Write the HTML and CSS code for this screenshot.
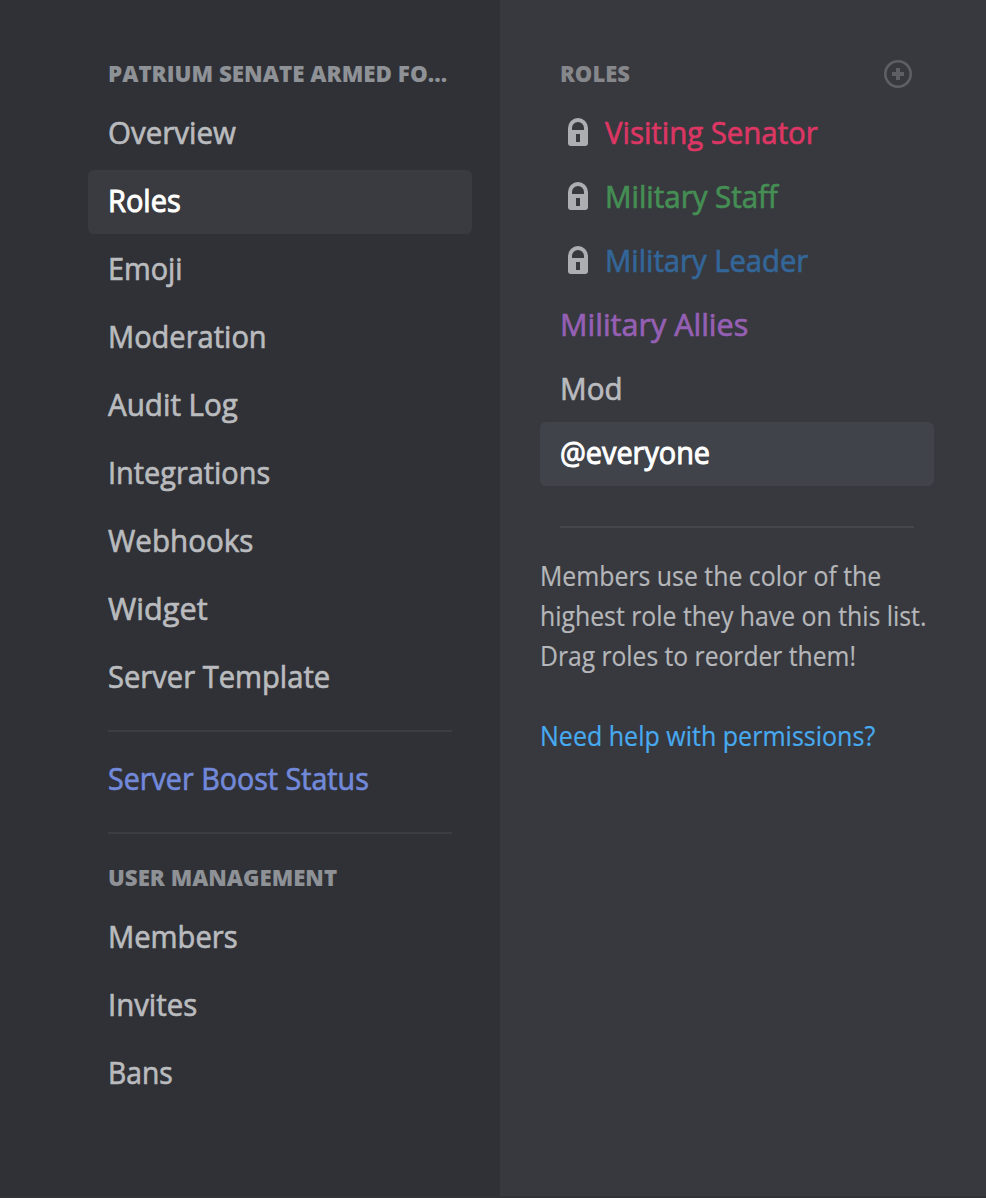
FILE: index.html
```html
<!DOCTYPE html>
<html lang="en">
<head>
<meta charset="utf-8">
<title>Server Settings - Roles</title>
<link rel="stylesheet" href="styles.css">
</head>
<body>
<svg class="sprite" aria-hidden="true">
  <symbol id="lock" viewBox="0 0 20 28">
    <path fill-rule="evenodd" d="M10 0A10 10 0 0 0 0 10V25A3 3 0 0 0 3 28H17A3 3 0 0 0 20 25V10A10 10 0 0 0 10 0ZM4 12V10A6 6 0 0 1 16 10V12ZM8 16H12V24H8Z"/>
  </symbol>
</svg>
<div class="app">
  <nav class="sidebar">
    <h2 class="heading"><span class="label t-server">Patrium Senate Armed Fo...</span></h2>
    <a class="item"><span class="label t-overview">Overview</span></a>
    <a class="item selected"><span class="label t-roles">Roles</span></a>
    <a class="item"><span class="label t-emoji">Emoji</span></a>
    <a class="item"><span class="label t-moderation">Moderation</span></a>
    <a class="item"><span class="label t-audit">Audit Log</span></a>
    <a class="item"><span class="label t-integrations">Integrations</span></a>
    <a class="item"><span class="label t-webhooks">Webhooks</span></a>
    <a class="item"><span class="label t-widget">Widget</span></a>
    <a class="item"><span class="label t-template">Server Template</span></a>
    <div class="separator"></div>
    <a class="item boost"><span class="label t-boost">Server Boost Status</span></a>
    <div class="separator"></div>
    <h2 class="heading users"><span class="label t-users">User Management</span></h2>
    <a class="item"><span class="label t-members">Members</span></a>
    <a class="item"><span class="label t-invites">Invites</span></a>
    <a class="item"><span class="label t-bans">Bans</span></a>
  </nav>
  <main class="roles">
    <header class="roles-header">
      <h2 class="heading"><span class="label t-roles-title">Roles</span></h2>
      <svg class="add" viewBox="0 0 28 28"><circle cx="14" cy="14" r="12.7"/><path d="M8 14H20M14 8V20"/></svg>
    </header>
    <div class="role red"><svg class="lock"><use href="#lock"/></svg><span class="label t-senator">Visiting Senator</span></div>
    <div class="role green"><svg class="lock"><use href="#lock"/></svg><span class="label t-staff">Military Staff</span></div>
    <div class="role blue"><svg class="lock"><use href="#lock"/></svg><span class="label t-leader">Military Leader</span></div>
    <div class="role purple"><span class="label t-allies">Military Allies</span></div>
    <div class="role"><span class="label t-mod">Mod</span></div>
    <div class="role selected"><span class="label t-everyone">@everyone</span></div>
    <div class="separator"></div>
    <p class="note"><span class="label t-note1">Members use the color of the</span><br><span class="label t-note2">highest role they have on this list.</span><br><span class="label t-note3">Drag roles to reorder them!</span></p>
    <a class="help"><span class="label t-help">Need help with permissions?</span></a>
  </main>
</div>
</body>
</html>
```
FILE: styles.css
```css
* { box-sizing: border-box; }
body { margin: 0; background: #36393f; font-family: "Open Sans", "Noto Sans", sans-serif; }
.sprite { display: none; }
.app { display: flex; height: 1198px; overflow: hidden; border-bottom: 2px solid #323337; background: #38393e; }
.sidebar { width: 500px; padding: 44px 28px 0 88px; background: #303136; }
.heading { height: 58px; margin: 0; padding-left: 20px; font-size: 23.5px; line-height: 58px; font-weight: 800; text-transform: uppercase; color: #8e9297; white-space: nowrap; }
.item { display: flex; align-items: center; height: 64px; margin-bottom: 4px; padding: 0 0 4px 20px; border-radius: 6px; font-size: 31px; font-weight: 500; -webkit-text-stroke: 0.7px currentColor; color: #b9bbbe; white-space: nowrap; }
.item.selected { background: #3a3b40; color: #fff; }
.item.boost { color: #7289da; }
.separator { height: 2px; margin: 20px 20px 16px; background: #3c3d42; }
.separator + .heading { margin-top: -2px; }
.roles { width: 486px; padding: 44px 52px 0 40px; }
.roles-header { display: flex; justify-content: space-between; align-items: center; padding-right: 22px; height: 58px; }
.roles-header .heading { color: #86878b; }
.add { width: 28px; height: 28px; margin-top: 2px; fill: none; stroke: #5d5f64; stroke-width: 2.6; }
.add path { stroke-width: 4; }
.role { display: flex; align-items: center; height: 64px; padding: 0 0 4px 20px; border-radius: 6px; font-size: 31px; font-weight: 500; -webkit-text-stroke: 0.7px currentColor; color: #b9bbbe; white-space: nowrap; }
.role.selected { background: #40434a; color: #fff; }
.item.selected, .role.selected { -webkit-text-stroke-width: 1px; }
.lock { width: 20px; height: 28px; margin: 0 17px 0 8px; fill: #adaeb1; stroke: none; }
.red { color: #dc3664; }
.green { color: #458e54; }
.blue { color: #336699; }
.purple { color: #9560b4; }
.roles .separator { margin: 40px 20px 28px; background: #45464b; }
.note { margin: 0 0 40px; font-size: 27px; line-height: 40px; color: #b5b7ba; white-space: nowrap; }
.help { display: block; font-size: 27px; line-height: 40px; color: #47aaf0; white-space: nowrap; }
.note, .help { -webkit-text-stroke: 0.2px currentColor; }

/* Labels are set slightly condensed */
.label { display: inline-block; transform-origin: 0 50%; }
.t-server { transform: scaleX(0.952); }
.t-overview { transform: scaleX(0.952); }
.t-roles { transform: scaleX(0.935); }
.t-emoji { transform: scaleX(0.93); }
.t-moderation { transform: scaleX(0.937); }
.t-audit { transform: scaleX(0.954); }
.t-integrations { transform: scaleX(0.931); }
.t-webhooks { transform: scaleX(0.954); }
.t-widget { transform: scaleX(0.99); }
.t-template { transform: scaleX(0.94); }
.t-boost { transform: scaleX(0.925); }
.t-users { transform: scaleX(0.946); }
.t-members { transform: scaleX(0.94); }
.t-invites { transform: scaleX(0.947); }
.t-bans { transform: scaleX(0.91); }
.t-roles-title { transform: scaleX(0.935); }
.t-senator { transform: scaleX(0.947); }
.t-staff { transform: scaleX(0.95); }
.t-leader { transform: scaleX(0.942); }
.t-allies { transform: scaleX(0.985); }
.t-mod { transform: scaleX(0.955); }
.t-everyone { transform: scaleX(0.93); }
.t-note1 { transform: scaleX(0.92); }
.t-note2 { transform: scaleX(0.919); }
.t-note3 { transform: scaleX(0.913); }
.t-help { transform: scaleX(0.927); }
```
